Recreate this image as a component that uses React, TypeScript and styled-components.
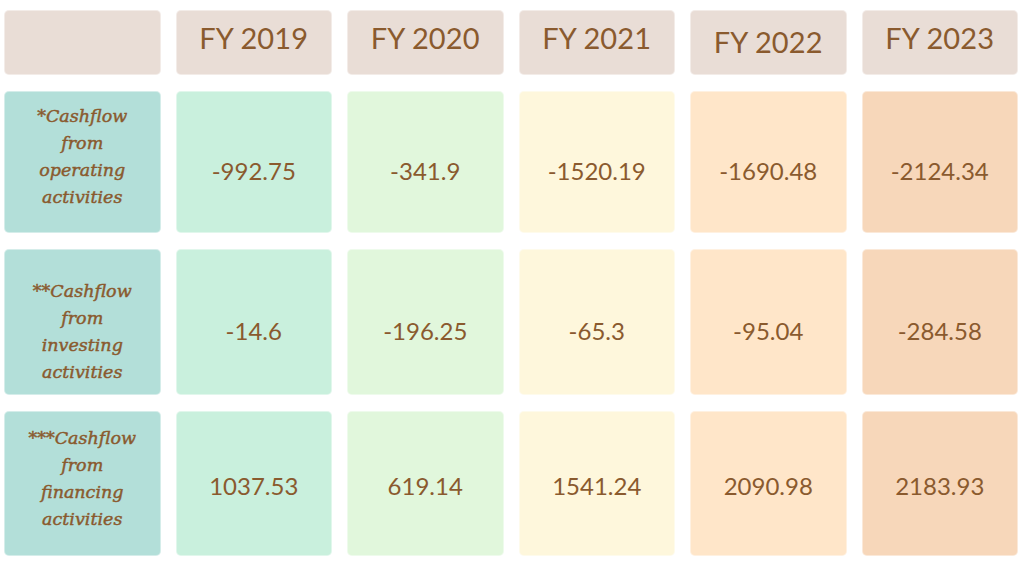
import React from "react";
import styled, { createGlobalStyle } from "styled-components";

const GlobalStyle = createGlobalStyle`
  html, body {
    margin: 0;
    padding: 0;
    background: #ffffff;
  }
  body {
    font-family: "Lato", "Liberation Sans", sans-serif;
  }
`;

const Table = styled.div`
  display: grid;
  grid-template-columns: repeat(6, 1fr);
  grid-template-rows: 65px 142px 146px 145px;
  column-gap: 15px;
  row-gap: 16px;
  width: 1014px;
  padding: 10px 0 0 4px;
  box-sizing: content-box;
`;

const Cell = styled.div<{ $bg: string; $shift?: number }>`
  background: ${(p) => p.$bg};
  border: 1px solid rgba(255, 255, 255, 0.45);
  border-radius: 5px;
  box-sizing: border-box;
  display: flex;
  align-items: center;
  justify-content: center;
  text-align: center;
  color: #8a5a2e;
  padding-top: ${(p) => Math.max(0, (p.$shift ?? 0) * 2)}px;
  padding-bottom: ${(p) => Math.max(0, -(p.$shift ?? 0) * 2)}px;
`;

const HeaderCell = styled(Cell)`
  font-family: "Lato", "Liberation Sans", sans-serif;
  font-size: 29px;
  font-weight: 400;
  letter-spacing: 0.1px;
`;

const LabelCell = styled(Cell)`
  font-family: "DejaVu Serif", "Liberation Serif", serif;
  font-style: italic;
  font-size: 17.5px;
  line-height: 27px;
  -webkit-text-stroke: 0.45px #8a5a2e;
`;

const ValueCell = styled(Cell)`
  font-family: "Lato", "Liberation Sans", sans-serif;
  font-size: 24px;
  font-weight: 400;
`;

const HEADER_BG = "#e9ddd6";
const LABEL_BG = "#b3dfd9";
const COL_BG = ["#c9f0dd", "#e1f7dc", "#fef7dc", "#ffe6c9", "#f7d7ba"];

const years: { label: string; shift: number }[] = [
  { label: "FY 2019", shift: -4.75 },
  { label: "FY 2020", shift: -4.75 },
  { label: "FY 2021", shift: -4.75 },
  { label: "FY 2022", shift: -0.75 },
  { label: "FY 2023", shift: -4.75 },
];

const rows: {
  label: string[];
  labelShift: number;
  valueShift: number;
  values: string[];
}[] = [
  {
    label: ["*Cashflow", "from", "operating", "activities"],
    labelShift: -5,
    valueShift: 8,
    values: ["-992.75", "-341.9", "-1520.19", "-1690.48", "-2124.34"],
  },
  {
    label: ["**Cashflow", "from", "investing", "activities"],
    labelShift: 9.5,
    valueShift: 8,
    values: ["-14.6", "-196.25", "-65.3", "-95.04", "-284.58"],
  },
  {
    label: ["***Cashflow", "from", "financing", "activities"],
    labelShift: -4.5,
    valueShift: 2,
    values: ["1037.53", "619.14", "1541.24", "2090.98", "2183.93"],
  },
];

export default function App() {
  return (
    <>
      <GlobalStyle />
      <Table>
        <HeaderCell $bg={HEADER_BG} />
        {years.map((y) => (
          <HeaderCell key={y.label} $bg={HEADER_BG} $shift={y.shift}>
            {y.label}
          </HeaderCell>
        ))}
        {rows.map((r) => (
          <React.Fragment key={r.label[0]}>
            <LabelCell $bg={LABEL_BG} $shift={r.labelShift}>
              <div>
                {r.label.map((l) => (
                  <div key={l}>{l}</div>
                ))}
              </div>
            </LabelCell>
            {r.values.map((v, i) => (
              <ValueCell key={v} $bg={COL_BG[i]} $shift={r.valueShift}>
                {v}
              </ValueCell>
            ))}
          </React.Fragment>
        ))}
      </Table>
    </>
  );
}
